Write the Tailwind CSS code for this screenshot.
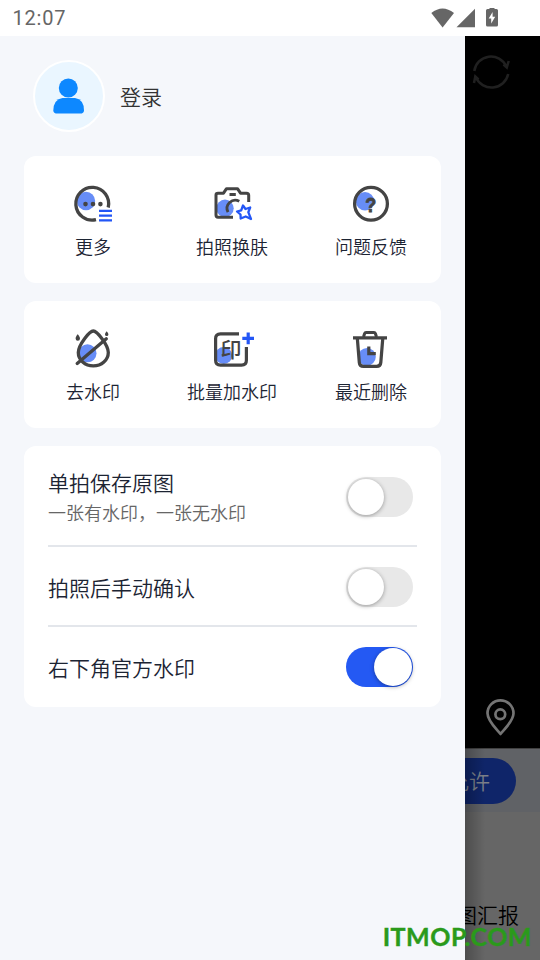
<!DOCTYPE html>
<html lang="zh-CN">
<head>
<meta charset="utf-8">
<title>水印相机</title>
<script src="https://cdn.jsdelivr.net/npm/@tailwindcss/browser@4"></script>
</head>
<body class="relative w-[540px] h-[960px] overflow-hidden flex flex-col bg-white font-['Noto_Sans_CJK_SC',sans-serif] font-[350] text-[#1c2433]">
<header class="h-9 shrink-0 flex items-center justify-between pl-[12.500px] pr-[42px] text-[#666]">
  <span class="font-['Roboto',sans-serif] font-normal text-[20px] leading-9 tracking-[0.8px]">12:07</span>
  <svg class="w-[67px] h-5" viewBox="431 7.5 67 20" fill="#666">
    <path d="M431.300 12.500Q442.500 3.500 454 12.500L442.600 27Z"/>
    <path d="M456.500 26.800L475 8.300V26.800Z"/>
    <path fill-rule="evenodd" d="M489.500 8.500V7.500H494.500V8.500H496.500Q498 8.500 498 10V24.500Q498 26 496.500 26H487.500Q486 26 486 24.500V10Q486 8.500 487.500 8.500ZM492.600 11.500L488.700 18H491.200V23L495.200 16.300H492.600Z"/>
  </svg>
</header>
<div class="flex flex-1 min-h-0">
  <aside class="w-[465px] shrink-0 bg-[#f5f7fb] px-6 pt-6 flex flex-col">
    <div class="flex items-center h-[72px] pl-[9px] gap-[15px]">
      <div class="size-[72px] rounded-full border-2 border-white bg-[#eaf6ff]">
        <svg class="size-[68px]" viewBox="35 62 68 68" fill="#0d88ff"><circle cx="68.300" cy="88" r="9.500"/><path d="M62.500 98H75Q84 99.500 84 110.500Q84 113.600 80 113.600H57.500Q53.300 113.600 53.300 110.500Q53.500 99.500 62.500 98Z"/></svg>
      </div>
      <span class="text-[21px] leading-8 pb-px text-[#333]">登录</span>
    </div>

    <section class="mt-6 h-[127px] rounded-xl bg-white grid grid-cols-3 text-[18px]">
      <div class="flex flex-col items-center pt-7 pr-px">
        <svg class="w-11 h-10" viewBox="71 184 44 40" fill="none" stroke-width="3.300" stroke="#444">
          <circle cx="86" cy="201" r="9.200" fill="#678df7" stroke="none"/>
          <path d="M108.200 207.500A16.400 16.400 0 1 0 96 219.700"/>
          <g fill="#444" stroke="none"><circle cx="85.500" cy="204.100" r="2.300"/><circle cx="93" cy="204.100" r="2.300"/><circle cx="100.400" cy="204.100" r="2.300"/></g>
          <path stroke="#2356f6" stroke-width="2.200" d="M99 210.900H112M99 215.600H112M99 220.400H112"/>
        </svg>
        <span class="mt-[9px] leading-[26px]">更多</span>
      </div>
      <div class="flex flex-col items-center pt-7 pr-px">
        <svg class="w-11 h-10" viewBox="210 184 44 40" fill="none" stroke-width="3" stroke="#444">
          <circle cx="225" cy="208.300" r="8.700" fill="#678df7" stroke="none"/>
          <path stroke-linejoin="round" d="M233 217.200H218Q216 217.200 216 215V195Q216 193.200 218 193.200H223.500L226.500 188.700H237.500L240.500 193.200H246.500Q248.700 193.200 248.700 195.300V202"/>
          <path d="M229.500 194.500H235.800"/>
          <path stroke-width="2.800" d="M239.300 201.300A8.200 8.200 0 0 0 228 212.200"/>
          <path stroke="#2356f6" stroke-width="2.300" stroke-linejoin="round" d="M243 205.500L245.500 209L250.200 207.500L248.300 212.200L251 219L245.700 216.500L240.700 218.500L240.500 214.500L237 211.500L241.200 210.300Z"/>
        </svg>
        <span class="mt-[9px] leading-[26px]">拍照换肤</span>
      </div>
      <div class="flex flex-col items-center pt-7 pr-px">
        <svg class="w-11 h-10" viewBox="349 184 44 40">
          <circle cx="365" cy="201.300" r="9.200" fill="#678df7"/>
          <circle cx="371" cy="203.700" r="16.400" fill="none" stroke="#444" stroke-width="3.300"/>
          <text x="370.700" y="211.600" text-anchor="middle" fill="#444" stroke="#444" stroke-width=".8" class="font-['Liberation_Sans',sans-serif] font-bold text-[21px]" textLength="11" lengthAdjust="spacingAndGlyphs">?</text>
        </svg>
        <span class="mt-[9px] leading-[26px]">问题反馈</span>
      </div>
    </section>

    <section class="mt-[18px] h-[127px] rounded-xl bg-white grid grid-cols-3 text-[18px]">
      <div class="flex flex-col items-center pt-7 pr-px">
        <svg class="w-11 h-10" viewBox="71 329 44 40" fill="none" stroke="#444" stroke-width="3.300" stroke-linecap="round">
          <circle cx="87.500" cy="353.300" r="9" fill="#678df7" stroke="none"/>
          <path d="M93.300 331C89.500 331 78.300 345 78.300 352.500A15 13.400 0 0 0 108.300 352.500C108.300 345 97 331 93.300 331Z"/>
          <path d="M77.200 363.500L106.300 338.700"/>
          <path fill="#444" stroke="none" d="M77.700 334.300C76.800 335.200 75.600 337 75.600 338.500A2.200 2.200 0 0 0 80 338.500C80 337 78.600 335.200 77.700 334.300ZM106.700 331.300C106 332 105 333.300 105 334.400A1.700 1.700 0 0 0 108.400 334.400C108.400 333.300 107.400 332 106.700 331.300Z"/>
        </svg>
        <span class="mt-[9px] leading-[26px]">去水印</span>
      </div>
      <div class="flex flex-col items-center pt-7 pr-px">
        <svg class="w-11 h-10" viewBox="210 329 44 40" fill="none" stroke="#444" stroke-width="3.200">
          <circle cx="223.700" cy="355.500" r="8.500" fill="#678df7" stroke="none"/>
          <path d="M239 333.800H220.500Q215.600 333.800 215.600 338.700V360.300Q215.600 365.200 220.500 365.200H241.500Q246.400 365.200 246.400 360.300V347"/>
          <text x="231" y="357.300" text-anchor="middle" fill="#444" stroke="none" class="text-[21px] font-medium">印</text>
          <path stroke="#2356f6" d="M242.300 338.300H254M248.200 332.600V344.200"/>
        </svg>
        <span class="mt-[9px] leading-[26px]">批量加水印</span>
      </div>
      <div class="flex flex-col items-center pt-7 pr-px">
        <svg class="w-11 h-10" viewBox="349 329 44 40" fill="none" stroke="#444" stroke-width="3.200">
          <circle cx="367" cy="356.700" r="8.800" fill="#678df7" stroke="none"/>
          <path d="M353 337.800H387"/><path stroke-width="3" d="M363.500 337L364.600 333.500Q365 332.500 366 332.500H374Q375 332.500 375.400 333.500L376.500 337"/>
          <path d="M357.300 338L359.300 362.500Q359.600 366.300 363.500 366.300H376.700Q380.500 366.300 380.800 362.500L382.800 338"/>
          <path d="M368.800 346.500V353.700H375.800"/>
        </svg>
        <span class="mt-[9px] leading-[26px]">最近删除</span>
      </div>
    </section>

    <section class="mt-[18px] h-[261px] rounded-xl bg-white px-6 flex flex-col text-[21px]">
      <div class="h-[101px] border-b-2 border-[#e3e6eb] flex items-center justify-between pr-1 pt-[3px]">
        <div class="flex flex-col"><span class="leading-[28px] pb-0.5">单拍保存原图</span><span class="text-[18px] leading-[28px] text-[#666]">一张有水印，一张无水印</span></div>
        <div class="w-[67px] h-10 rounded-full bg-[#e8e8e8] p-0.5"><div class="size-9 rounded-full bg-white shadow-[0_1px_4px_rgba(0,0,0,0.35)]"></div></div>
      </div>
      <div class="h-20 border-b-2 border-[#e3e6eb] flex items-center justify-between pr-1 pt-0.5">
        <span class="leading-8">拍照后手动确认</span>
        <div class="w-[67px] h-10 rounded-full bg-[#e8e8e8] p-0.5"><div class="size-9 rounded-full bg-white shadow-[0_1px_4px_rgba(0,0,0,0.35)]"></div></div>
      </div>
      <div class="h-20 flex items-center justify-between pr-1">
        <span class="leading-8">右下角官方水印</span>
        <div class="w-[67px] h-10 rounded-full bg-[#2459f3] p-px flex justify-end"><div class="size-[38px] rounded-full bg-white shadow-[0_1px_4px_rgba(0,0,0,0.35)]"></div></div>
      </div>
    </section>
  </aside>

  <main class="relative w-[75px] overflow-hidden bg-[#666] flex flex-col">
    <div class="h-[712px] shrink-0 bg-black flex flex-col justify-between items-start">
      <svg class="ml-1.5 mt-4 size-10" viewBox="471 52 40 40" fill="none" stroke="#202020" stroke-width="2.500">
        <path d="M474.300 71A16.800 16.800 0 0 1 506.300 66.500M508.200 74A17 17 0 0 1 475.800 77M508.700 61L506.800 67.500L503.500 64.500M474 83L475.300 76.500L478.500 79.500"/>
      </svg>
      <svg class="ml-5 mb-2.5 w-8 h-10" viewBox="485 698 32 40" fill="none" stroke="#747474" stroke-width="2.700" stroke-linejoin="round">
        <path d="M500.500 734C496 728.500 487.500 721 487.500 713.300A13 13 0 0 1 513.500 713.300C513.500 721 505 728.500 500.500 734Z"/><circle cx="500.300" cy="714.300" r="4.900"/>
      </svg>
    </div>
    <div class="h-16 shrink-0 border-t border-[#404040] bg-[#606266] flex items-center justify-end pr-6">
      <div class="w-[120px] h-[46px] shrink-0 rounded-full bg-[#0f2569] flex items-center justify-end pr-[26px] text-[21px] text-[#7c8089]">允许</div>
    </div>
    <div class="h-[148px] flex items-end justify-end pr-[21px] pb-[31px]"><span class="shrink-0 whitespace-nowrap text-[21px] leading-[30px] text-black">拼图汇报</span></div>
    <div class="absolute left-0 bottom-0 w-5 h-[212px] bg-linear-to-r from-black/25 to-transparent"></div>
  </main>
</div>
<div class="absolute right-[8px] bottom-[9px] font-['Lato',sans-serif] font-bold text-[25px] leading-[30px] tracking-[0.5px] [-webkit-text-stroke:0.4px_#2a9a1b] text-[#2a9a1b]">ITMOP.COM</div>
</body>
</html>
